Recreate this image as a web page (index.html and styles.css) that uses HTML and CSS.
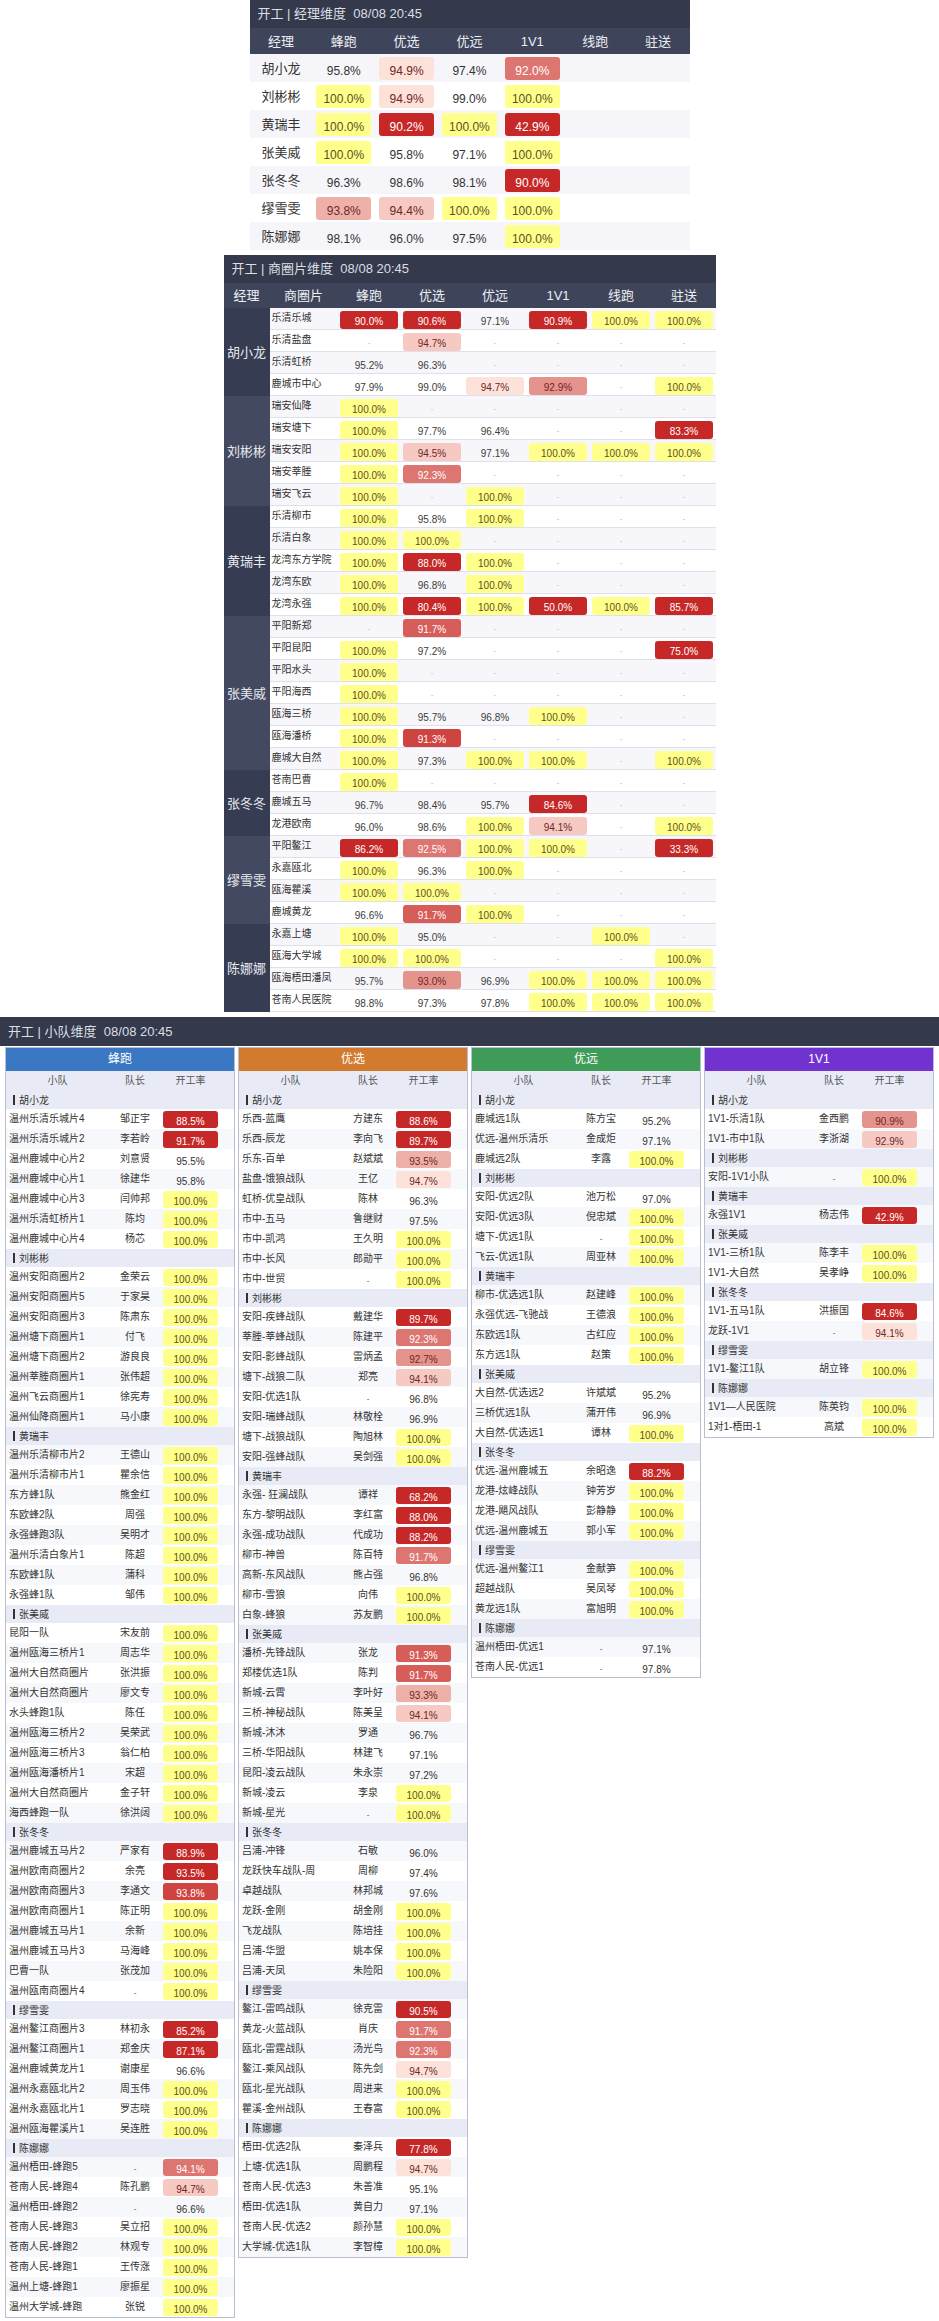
FILE: index.html
```html
<!DOCTYPE html>
<html lang="zh">
<head>
<meta charset="utf-8">
<title>开工</title>
<link rel="stylesheet" href="styles.css">
</head>
<body>
<section class="sec1">
<div class="ttl">开工 | 经理维度  08/08 20:45</div>
<table class="mgr">
<thead><tr><th>经理</th><th>蜂跑</th><th>优选</th><th>优远</th><th>1V1</th><th>线跑</th><th>驻送</th></tr></thead>
<tbody>
<tr><td>胡小龙</td><td><b>95.8%</b></td><td><b class="r7">94.9%</b></td><td><b>97.4%</b></td><td><b class="r3">92.0%</b></td><td></td><td></td></tr>
<tr><td>刘彬彬</td><td><b class="y">100.0%</b></td><td><b class="r7">94.9%</b></td><td><b>99.0%</b></td><td><b class="y">100.0%</b></td><td></td><td></td></tr>
<tr><td>黄瑞丰</td><td><b class="y">100.0%</b></td><td><b class="r0">90.2%</b></td><td><b class="y">100.0%</b></td><td><b class="r0">42.9%</b></td><td></td><td></td></tr>
<tr><td>张美威</td><td><b class="y">100.0%</b></td><td><b>95.8%</b></td><td><b>97.1%</b></td><td><b class="y">100.0%</b></td><td></td><td></td></tr>
<tr><td>张冬冬</td><td><b>96.3%</b></td><td><b>98.6%</b></td><td><b>98.1%</b></td><td><b class="r0">90.0%</b></td><td></td><td></td></tr>
<tr><td>缪雪雯</td><td><b class="r5">93.8%</b></td><td><b class="r6">94.4%</b></td><td><b class="y">100.0%</b></td><td><b class="y">100.0%</b></td><td></td><td></td></tr>
<tr><td>陈娜娜</td><td><b>98.1%</b></td><td><b>96.0%</b></td><td><b>97.5%</b></td><td><b class="y">100.0%</b></td><td></td><td></td></tr>
</tbody>
</table>
</section>

<section class="sec2">
<div class="ttl">开工 | 商圈片维度  08/08 20:45</div>
<table class="shq">
<colgroup><col class="c-m"><col class="c-n"><col><col><col><col><col><col></colgroup>
<thead><tr><th>经理</th><th>商圈片</th><th>蜂跑</th><th>优选</th><th>优远</th><th>1V1</th><th>线跑</th><th>驻送</th></tr></thead>
<tbody>
<tr><td class="m" rowspan="4">胡小龙</td><td class="n">乐清乐城</td><td><b class="r0">90.0%</b></td><td><b class="r0">90.6%</b></td><td><b>97.1%</b></td><td><b class="r0">90.9%</b></td><td><b class="y">100.0%</b></td><td><b class="y">100.0%</b></td></tr>
<tr><td class="n">乐清盐盘</td><td class="na">-</td><td><b class="r6">94.7%</b></td><td class="na">-</td><td class="na">-</td><td class="na">-</td><td class="na">-</td></tr>
<tr><td class="n">乐清虹桥</td><td><b>95.2%</b></td><td><b>96.3%</b></td><td class="na">-</td><td class="na">-</td><td class="na">-</td><td class="na">-</td></tr>
<tr><td class="n">鹿城市中心</td><td><b>97.9%</b></td><td><b>99.0%</b></td><td><b class="r7">94.7%</b></td><td><b class="r4">92.9%</b></td><td class="na">-</td><td><b class="y">100.0%</b></td></tr>

<tr><td class="m m2" rowspan="5">刘彬彬</td><td class="n">瑞安仙降</td><td><b class="y">100.0%</b></td><td class="na">-</td><td class="na">-</td><td class="na">-</td><td class="na">-</td><td class="na">-</td></tr>
<tr><td class="n">瑞安塘下</td><td><b class="y">100.0%</b></td><td><b>97.7%</b></td><td><b>96.4%</b></td><td class="na">-</td><td class="na">-</td><td><b class="r0">83.3%</b></td></tr>
<tr><td class="n">瑞安安阳</td><td><b class="y">100.0%</b></td><td><b class="r6">94.5%</b></td><td><b>97.1%</b></td><td><b class="y">100.0%</b></td><td><b class="y">100.0%</b></td><td><b class="y">100.0%</b></td></tr>
<tr><td class="n">瑞安莘塍</td><td><b class="y">100.0%</b></td><td><b class="r3">92.3%</b></td><td class="na">-</td><td class="na">-</td><td class="na">-</td><td class="na">-</td></tr>
<tr><td class="n">瑞安飞云</td><td><b class="y">100.0%</b></td><td class="na">-</td><td><b class="y">100.0%</b></td><td class="na">-</td><td class="na">-</td><td class="na">-</td></tr>

<tr><td class="m" rowspan="5">黄瑞丰</td><td class="n">乐清柳市</td><td><b class="y">100.0%</b></td><td><b>95.8%</b></td><td><b class="y">100.0%</b></td><td class="na">-</td><td class="na">-</td><td class="na">-</td></tr>
<tr><td class="n">乐清白象</td><td><b class="y">100.0%</b></td><td><b class="y">100.0%</b></td><td class="na">-</td><td class="na">-</td><td class="na">-</td><td class="na">-</td></tr>
<tr><td class="n">龙湾东方学院</td><td><b class="y">100.0%</b></td><td><b class="r0">88.0%</b></td><td><b class="y">100.0%</b></td><td class="na">-</td><td class="na">-</td><td class="na">-</td></tr>
<tr><td class="n">龙湾东欧</td><td><b class="y">100.0%</b></td><td><b>96.8%</b></td><td><b class="y">100.0%</b></td><td class="na">-</td><td class="na">-</td><td class="na">-</td></tr>
<tr><td class="n">龙湾永强</td><td><b class="y">100.0%</b></td><td><b class="r0">80.4%</b></td><td><b class="y">100.0%</b></td><td><b class="r0">50.0%</b></td><td><b class="y">100.0%</b></td><td><b class="r0">85.7%</b></td></tr>

<tr><td class="m m2" rowspan="7">张美威</td><td class="n">平阳新郑</td><td class="na">-</td><td><b class="r2">91.7%</b></td><td class="na">-</td><td class="na">-</td><td class="na">-</td><td class="na">-</td></tr>
<tr><td class="n">平阳昆阳</td><td><b class="y">100.0%</b></td><td><b>97.2%</b></td><td class="na">-</td><td class="na">-</td><td class="na">-</td><td><b class="r0">75.0%</b></td></tr>
<tr><td class="n">平阳水头</td><td><b class="y">100.0%</b></td><td class="na">-</td><td class="na">-</td><td class="na">-</td><td class="na">-</td><td class="na">-</td></tr>
<tr><td class="n">平阳海西</td><td><b class="y">100.0%</b></td><td class="na">-</td><td class="na">-</td><td class="na">-</td><td class="na">-</td><td class="na">-</td></tr>
<tr><td class="n">瓯海三桥</td><td><b class="y">100.0%</b></td><td><b>95.7%</b></td><td><b>96.8%</b></td><td><b class="y">100.0%</b></td><td class="na">-</td><td class="na">-</td></tr>
<tr><td class="n">瓯海潘桥</td><td><b class="y">100.0%</b></td><td><b class="r1">91.3%</b></td><td class="na">-</td><td class="na">-</td><td class="na">-</td><td class="na">-</td></tr>
<tr><td class="n">鹿城大自然</td><td><b class="y">100.0%</b></td><td><b>97.3%</b></td><td><b class="y">100.0%</b></td><td><b class="y">100.0%</b></td><td class="na">-</td><td><b class="y">100.0%</b></td></tr>

<tr><td class="m" rowspan="3">张冬冬</td><td class="n">苍南巴曹</td><td><b class="y">100.0%</b></td><td class="na">-</td><td class="na">-</td><td class="na">-</td><td class="na">-</td><td class="na">-</td></tr>
<tr><td class="n">鹿城五马</td><td><b>96.7%</b></td><td><b>98.4%</b></td><td><b>95.7%</b></td><td><b class="r0">84.6%</b></td><td class="na">-</td><td class="na">-</td></tr>
<tr><td class="n">龙港欧南</td><td><b>96.0%</b></td><td><b>98.6%</b></td><td><b class="y">100.0%</b></td><td><b class="r6">94.1%</b></td><td class="na">-</td><td><b class="y">100.0%</b></td></tr>

<tr><td class="m m2" rowspan="4">缪雪雯</td><td class="n">平阳鳌江</td><td><b class="r0">86.2%</b></td><td><b class="r3">92.5%</b></td><td><b class="y">100.0%</b></td><td><b class="y">100.0%</b></td><td class="na">-</td><td><b class="r0">33.3%</b></td></tr>
<tr><td class="n">永嘉瓯北</td><td><b class="y">100.0%</b></td><td><b>96.3%</b></td><td><b class="y">100.0%</b></td><td class="na">-</td><td class="na">-</td><td class="na">-</td></tr>
<tr><td class="n">瓯海瞿溪</td><td><b class="y">100.0%</b></td><td><b class="y">100.0%</b></td><td class="na">-</td><td class="na">-</td><td class="na">-</td><td class="na">-</td></tr>
<tr><td class="n">鹿城黄龙</td><td><b>96.6%</b></td><td><b class="r2">91.7%</b></td><td><b class="y">100.0%</b></td><td class="na">-</td><td class="na">-</td><td class="na">-</td></tr>

<tr><td class="m" rowspan="4">陈娜娜</td><td class="n">永嘉上塘</td><td><b class="y">100.0%</b></td><td><b>95.0%</b></td><td class="na">-</td><td class="na">-</td><td><b class="y">100.0%</b></td><td class="na">-</td></tr>
<tr><td class="n">瓯海大学城</td><td><b class="y">100.0%</b></td><td><b class="y">100.0%</b></td><td class="na">-</td><td class="na">-</td><td class="na">-</td><td><b class="y">100.0%</b></td></tr>
<tr><td class="n">瓯海梧田潘凤</td><td><b>95.7%</b></td><td><b class="r4">93.0%</b></td><td><b>96.9%</b></td><td><b class="y">100.0%</b></td><td><b class="y">100.0%</b></td><td><b class="y">100.0%</b></td></tr>
<tr><td class="n">苍南人民医院</td><td><b>98.8%</b></td><td><b>97.3%</b></td><td><b>97.8%</b></td><td><b class="y">100.0%</b></td><td><b class="y">100.0%</b></td><td><b class="y">100.0%</b></td></tr>
</tbody>
</table>
</section>

<section class="sec3">
<div class="ttl ttl3">开工 | 小队维度  08/08 20:45</div>
<div class="cards">

<div class="card">
<h3 class="h-blue">蜂跑</h3>
<table class="tm">
<colgroup><col class="c1"><col class="c2"><col class="c3"><col></colgroup>
<thead><tr><th>小队</th><th>队长</th><th>开工率</th><th></th></tr></thead>
<tbody>
<tr class="g"><td colspan="4"><i></i>胡小龙</td></tr>
<tr><td class="t">温州乐清乐城片4</td><td>邹正宇</td><td><b class="r0">88.5%</b></td><td></td></tr>
<tr><td class="t">温州乐清乐城片2</td><td>李若岭</td><td><b class="r0">91.7%</b></td><td></td></tr>
<tr><td class="t">温州鹿城中心片2</td><td>刘意贤</td><td><b>95.5%</b></td><td></td></tr>
<tr><td class="t">温州鹿城中心片1</td><td>徐建华</td><td><b>95.8%</b></td><td></td></tr>
<tr><td class="t">温州鹿城中心片3</td><td>闫帅邦</td><td><b class="y">100.0%</b></td><td></td></tr>
<tr><td class="t">温州乐清虹桥片1</td><td>陈均</td><td><b class="y">100.0%</b></td><td></td></tr>
<tr><td class="t">温州鹿城中心片4</td><td>杨芯</td><td><b class="y">100.0%</b></td><td></td></tr>
<tr class="g"><td colspan="4"><i></i>刘彬彬</td></tr>
<tr><td class="t">温州安阳商圈片2</td><td>金荣云</td><td><b class="y">100.0%</b></td><td></td></tr>
<tr><td class="t">温州安阳商圈片5</td><td>于家昊</td><td><b class="y">100.0%</b></td><td></td></tr>
<tr><td class="t">温州安阳商圈片3</td><td>陈肃东</td><td><b class="y">100.0%</b></td><td></td></tr>
<tr><td class="t">温州塘下商圈片1</td><td>付飞</td><td><b class="y">100.0%</b></td><td></td></tr>
<tr><td class="t">温州塘下商圈片2</td><td>游良良</td><td><b class="y">100.0%</b></td><td></td></tr>
<tr><td class="t">温州莘塍商圈片1</td><td>张伟超</td><td><b class="y">100.0%</b></td><td></td></tr>
<tr><td class="t">温州飞云商圈片1</td><td>徐宪寿</td><td><b class="y">100.0%</b></td><td></td></tr>
<tr><td class="t">温州仙降商圈片1</td><td>马小康</td><td><b class="y">100.0%</b></td><td></td></tr>
<tr class="g"><td colspan="4"><i></i>黄瑞丰</td></tr>
<tr><td class="t">温州乐清柳市片2</td><td>王德山</td><td><b class="y">100.0%</b></td><td></td></tr>
<tr><td class="t">温州乐清柳市片1</td><td>瞿余信</td><td><b class="y">100.0%</b></td><td></td></tr>
<tr><td class="t">东方蜂1队</td><td>熊金红</td><td><b class="y">100.0%</b></td><td></td></tr>
<tr><td class="t">东欧蜂2队</td><td>周强</td><td><b class="y">100.0%</b></td><td></td></tr>
<tr><td class="t">永强蜂跑3队</td><td>吴明才</td><td><b class="y">100.0%</b></td><td></td></tr>
<tr><td class="t">温州乐清白象片1</td><td>陈超</td><td><b class="y">100.0%</b></td><td></td></tr>
<tr><td class="t">东欧蜂1队</td><td>蒲科</td><td><b class="y">100.0%</b></td><td></td></tr>
<tr><td class="t">永强蜂1队</td><td>邹伟</td><td><b class="y">100.0%</b></td><td></td></tr>
<tr class="g"><td colspan="4"><i></i>张美威</td></tr>
<tr><td class="t">昆阳一队</td><td>宋友前</td><td><b class="y">100.0%</b></td><td></td></tr>
<tr><td class="t">温州瓯海三桥片1</td><td>周志华</td><td><b class="y">100.0%</b></td><td></td></tr>
<tr><td class="t">温州大自然商圈片</td><td>张洪振</td><td><b class="y">100.0%</b></td><td></td></tr>
<tr><td class="t">温州大自然商圈片</td><td>廖文专</td><td><b class="y">100.0%</b></td><td></td></tr>
<tr><td class="t">水头蜂跑1队</td><td>陈任</td><td><b class="y">100.0%</b></td><td></td></tr>
<tr><td class="t">温州瓯海三桥片2</td><td>吴荣武</td><td><b class="y">100.0%</b></td><td></td></tr>
<tr><td class="t">温州瓯海三桥片3</td><td>翁仁柏</td><td><b class="y">100.0%</b></td><td></td></tr>
<tr><td class="t">温州瓯海潘桥片1</td><td>宋超</td><td><b class="y">100.0%</b></td><td></td></tr>
<tr><td class="t">温州大自然商圈片</td><td>金子轩</td><td><b class="y">100.0%</b></td><td></td></tr>
<tr><td class="t">海西蜂跑一队</td><td>徐洪阔</td><td><b class="y">100.0%</b></td><td></td></tr>
<tr class="g"><td colspan="4"><i></i>张冬冬</td></tr>
<tr><td class="t">温州鹿城五马片2</td><td>严家有</td><td><b class="r0">88.9%</b></td><td></td></tr>
<tr><td class="t">温州欧南商圈片2</td><td>余亮</td><td><b class="r0">93.5%</b></td><td></td></tr>
<tr><td class="t">温州欧南商圈片3</td><td>李通文</td><td><b class="r1">93.8%</b></td><td></td></tr>
<tr><td class="t">温州欧南商圈片1</td><td>陈正明</td><td><b class="y">100.0%</b></td><td></td></tr>
<tr><td class="t">温州鹿城五马片1</td><td>余新</td><td><b class="y">100.0%</b></td><td></td></tr>
<tr><td class="t">温州鹿城五马片3</td><td>马海峰</td><td><b class="y">100.0%</b></td><td></td></tr>
<tr><td class="t">巴曹一队</td><td>张茂加</td><td><b class="y">100.0%</b></td><td></td></tr>
<tr><td class="t">温州瓯南商圈片4</td><td class="nd">-</td><td><b class="y">100.0%</b></td><td></td></tr>
<tr class="g"><td colspan="4"><i></i>缪雪雯</td></tr>
<tr><td class="t">温州鳌江商圈片3</td><td>林初永</td><td><b class="r0">85.2%</b></td><td></td></tr>
<tr><td class="t">温州鳌江商圈片1</td><td>郑金庆</td><td><b class="r0">87.1%</b></td><td></td></tr>
<tr><td class="t">温州鹿城黄龙片1</td><td>谢康星</td><td><b>96.6%</b></td><td></td></tr>
<tr><td class="t">温州永嘉瓯北片2</td><td>周玉伟</td><td><b class="y">100.0%</b></td><td></td></tr>
<tr><td class="t">温州永嘉瓯北片1</td><td>罗志晓</td><td><b class="y">100.0%</b></td><td></td></tr>
<tr><td class="t">温州瓯海瞿溪片1</td><td>吴连胜</td><td><b class="y">100.0%</b></td><td></td></tr>
<tr class="g"><td colspan="4"><i></i>陈娜娜</td></tr>
<tr><td class="t">温州梧田-蜂跑5</td><td class="nd">-</td><td><b class="r3">94.1%</b></td><td></td></tr>
<tr><td class="t">苍南人民-蜂跑4</td><td>陈孔鹏</td><td><b class="r6">94.7%</b></td><td></td></tr>
<tr><td class="t">温州梧田-蜂跑2</td><td class="nd">-</td><td><b>96.6%</b></td><td></td></tr>
<tr><td class="t">苍南人民-蜂跑3</td><td>吴立招</td><td><b class="y">100.0%</b></td><td></td></tr>
<tr><td class="t">苍南人民-蜂跑2</td><td>林观专</td><td><b class="y">100.0%</b></td><td></td></tr>
<tr><td class="t">苍南人民-蜂跑1</td><td>王传涨</td><td><b class="y">100.0%</b></td><td></td></tr>
<tr><td class="t">温州上塘-蜂跑1</td><td>廖振星</td><td><b class="y">100.0%</b></td><td></td></tr>
<tr><td class="t">温州大学城-蜂跑</td><td>张锐</td><td><b class="y">100.0%</b></td><td></td></tr>
</tbody>
</table>
</div>

<div class="card">
<h3 class="h-orange">优选</h3>
<table class="tm">
<colgroup><col class="c1"><col class="c2"><col class="c3"><col></colgroup>
<thead><tr><th>小队</th><th>队长</th><th>开工率</th><th></th></tr></thead>
<tbody>
<tr class="g"><td colspan="4"><i></i>胡小龙</td></tr>
<tr><td class="t">乐西-蓝鹰</td><td>方建东</td><td><b class="r0">88.6%</b></td><td></td></tr>
<tr><td class="t">乐西-辰龙</td><td>李向飞</td><td><b class="r0">89.7%</b></td><td></td></tr>
<tr><td class="t">乐东-百单</td><td>赵斌斌</td><td><b class="r5">93.5%</b></td><td></td></tr>
<tr><td class="t">盐盘-饿狼战队</td><td>王亿</td><td><b class="r7">94.7%</b></td><td></td></tr>
<tr><td class="t">虹桥-优皇战队</td><td>陈林</td><td><b>96.3%</b></td><td></td></tr>
<tr><td class="t">市中-五马</td><td>鲁继财</td><td><b>97.5%</b></td><td></td></tr>
<tr><td class="t">市中-凯鸿</td><td>王久明</td><td><b class="y">100.0%</b></td><td></td></tr>
<tr><td class="t">市中-长风</td><td>郎勋平</td><td><b class="y">100.0%</b></td><td></td></tr>
<tr><td class="t">市中-世贸</td><td class="nd">-</td><td><b class="y">100.0%</b></td><td></td></tr>
<tr class="g"><td colspan="4"><i></i>刘彬彬</td></tr>
<tr><td class="t">安阳-疾蜂战队</td><td>戴建华</td><td><b class="r0">89.7%</b></td><td></td></tr>
<tr><td class="t">莘塍-莘蜂战队</td><td>陈建平</td><td><b class="r3">92.3%</b></td><td></td></tr>
<tr><td class="t">安阳-影蜂战队</td><td>雷炳孟</td><td><b class="r4">92.7%</b></td><td></td></tr>
<tr><td class="t">塘下-战狼二队</td><td>郑亮</td><td><b class="r6">94.1%</b></td><td></td></tr>
<tr><td class="t">安阳-优选1队</td><td class="nd">-</td><td><b>96.8%</b></td><td></td></tr>
<tr><td class="t">安阳-瑞蜂战队</td><td>林敬栓</td><td><b>96.9%</b></td><td></td></tr>
<tr><td class="t">塘下-战狼战队</td><td>陶旭林</td><td><b class="y">100.0%</b></td><td></td></tr>
<tr><td class="t">安阳-强蜂战队</td><td>吴剑强</td><td><b class="y">100.0%</b></td><td></td></tr>
<tr class="g"><td colspan="4"><i></i>黄瑞丰</td></tr>
<tr><td class="t">永强- 狂澜战队</td><td>谭祥</td><td><b class="r0">68.2%</b></td><td></td></tr>
<tr><td class="t">东方-黎明战队</td><td>李红富</td><td><b class="r0">88.0%</b></td><td></td></tr>
<tr><td class="t">永强-成功战队</td><td>代成功</td><td><b class="r0">88.2%</b></td><td></td></tr>
<tr><td class="t">柳市-神兽</td><td>陈百特</td><td><b class="r3">91.7%</b></td><td></td></tr>
<tr><td class="t">高新-东风战队</td><td>熊占强</td><td><b>96.8%</b></td><td></td></tr>
<tr><td class="t">柳市-雪狼</td><td>向伟</td><td><b class="y">100.0%</b></td><td></td></tr>
<tr><td class="t">白象-蜂狼</td><td>苏友鹏</td><td><b class="y">100.0%</b></td><td></td></tr>
<tr class="g"><td colspan="4"><i></i>张美威</td></tr>
<tr><td class="t">潘桥-先锋战队</td><td>张龙</td><td><b class="r2">91.3%</b></td><td></td></tr>
<tr><td class="t">郑楼优选1队</td><td>陈判</td><td><b class="r2">91.7%</b></td><td></td></tr>
<tr><td class="t">新城-云霄</td><td>李叶好</td><td><b class="r5">93.3%</b></td><td></td></tr>
<tr><td class="t">三桥-神秘战队</td><td>陈美呈</td><td><b class="r6">94.1%</b></td><td></td></tr>
<tr><td class="t">新城-沐沐</td><td>罗通</td><td><b>96.7%</b></td><td></td></tr>
<tr><td class="t">三桥-华阳战队</td><td>林建飞</td><td><b>97.1%</b></td><td></td></tr>
<tr><td class="t">昆阳-凌云战队</td><td>朱永崇</td><td><b>97.2%</b></td><td></td></tr>
<tr><td class="t">新城-凌云</td><td>李泉</td><td><b class="y">100.0%</b></td><td></td></tr>
<tr><td class="t">新城-星光</td><td class="nd">-</td><td><b class="y">100.0%</b></td><td></td></tr>
<tr class="g"><td colspan="4"><i></i>张冬冬</td></tr>
<tr><td class="t">吕浦-冲锋</td><td>石敏</td><td><b>96.0%</b></td><td></td></tr>
<tr><td class="t">龙跃快车战队-周</td><td>周柳</td><td><b>97.4%</b></td><td></td></tr>
<tr><td class="t">卓越战队</td><td>林邦城</td><td><b>97.6%</b></td><td></td></tr>
<tr><td class="t">龙跃-金刚</td><td>胡金刚</td><td><b class="y">100.0%</b></td><td></td></tr>
<tr><td class="t">飞龙战队</td><td>陈培挂</td><td><b class="y">100.0%</b></td><td></td></tr>
<tr><td class="t">吕浦-华盟</td><td>姚本保</td><td><b class="y">100.0%</b></td><td></td></tr>
<tr><td class="t">吕浦-天凤</td><td>朱险阳</td><td><b class="y">100.0%</b></td><td></td></tr>
<tr class="g"><td colspan="4"><i></i>缪雪雯</td></tr>
<tr><td class="t">鳌江-雷鸣战队</td><td>徐克雷</td><td><b class="r0">90.5%</b></td><td></td></tr>
<tr><td class="t">黄龙-火蓝战队</td><td>肖庆</td><td><b class="r3">91.7%</b></td><td></td></tr>
<tr><td class="t">瓯北-雷霆战队</td><td>汤光鸟</td><td><b class="r3">92.3%</b></td><td></td></tr>
<tr><td class="t">鳌江-乘风战队</td><td>陈先剑</td><td><b class="r7">94.7%</b></td><td></td></tr>
<tr><td class="t">瓯北-星光战队</td><td>周进来</td><td><b class="y">100.0%</b></td><td></td></tr>
<tr><td class="t">瞿溪-金州战队</td><td>王春富</td><td><b class="y">100.0%</b></td><td></td></tr>
<tr class="g"><td colspan="4"><i></i>陈娜娜</td></tr>
<tr><td class="t">梧田-优选2队</td><td>秦泽兵</td><td><b class="r0">77.8%</b></td><td></td></tr>
<tr><td class="t">上塘-优选1队</td><td>周鹏程</td><td><b class="r7">94.7%</b></td><td></td></tr>
<tr><td class="t">苍南人民-优选3</td><td>朱善准</td><td><b>95.1%</b></td><td></td></tr>
<tr><td class="t">梧田-优选1队</td><td>黄自力</td><td><b>97.1%</b></td><td></td></tr>
<tr><td class="t">苍南人民-优选2</td><td>颜孙慧</td><td><b class="y">100.0%</b></td><td></td></tr>
<tr><td class="t">大学城-优选1队</td><td>李智樟</td><td><b class="y">100.0%</b></td><td></td></tr>
</tbody>
</table>
</div>

<div class="card">
<h3 class="h-green">优远</h3>
<table class="tm">
<colgroup><col class="c1"><col class="c2"><col class="c3"><col></colgroup>
<thead><tr><th>小队</th><th>队长</th><th>开工率</th><th></th></tr></thead>
<tbody>
<tr class="g"><td colspan="4"><i></i>胡小龙</td></tr>
<tr><td class="t">鹿城远1队</td><td>陈方宝</td><td><b>95.2%</b></td><td></td></tr>
<tr><td class="t">优远-温州乐清乐</td><td>金成炬</td><td><b>97.1%</b></td><td></td></tr>
<tr><td class="t">鹿城远2队</td><td>李露</td><td><b class="y">100.0%</b></td><td></td></tr>
<tr class="g"><td colspan="4"><i></i>刘彬彬</td></tr>
<tr><td class="t">安阳-优远2队</td><td>池万松</td><td><b>97.0%</b></td><td></td></tr>
<tr><td class="t">安阳-优远3队</td><td>倪忠斌</td><td><b class="y">100.0%</b></td><td></td></tr>
<tr><td class="t">塘下-优远1队</td><td class="nd">-</td><td><b class="y">100.0%</b></td><td></td></tr>
<tr><td class="t">飞云-优远1队</td><td>周亚林</td><td><b class="y">100.0%</b></td><td></td></tr>
<tr class="g"><td colspan="4"><i></i>黄瑞丰</td></tr>
<tr><td class="t">柳市-优选远1队</td><td>赵建峰</td><td><b class="y">100.0%</b></td><td></td></tr>
<tr><td class="t">永强优远-飞驰战</td><td>王德浪</td><td><b class="y">100.0%</b></td><td></td></tr>
<tr><td class="t">东欧远1队</td><td>古红应</td><td><b class="y">100.0%</b></td><td></td></tr>
<tr><td class="t">东方远1队</td><td>赵策</td><td><b class="y">100.0%</b></td><td></td></tr>
<tr class="g"><td colspan="4"><i></i>张美威</td></tr>
<tr><td class="t">大自然-优选远2</td><td>许斌斌</td><td><b>95.2%</b></td><td></td></tr>
<tr><td class="t">三桥优远1队</td><td>蒲开伟</td><td><b>96.9%</b></td><td></td></tr>
<tr><td class="t">大自然-优选远1</td><td>谭林</td><td><b class="y">100.0%</b></td><td></td></tr>
<tr class="g"><td colspan="4"><i></i>张冬冬</td></tr>
<tr><td class="t">优远-温州鹿城五</td><td>余昭逸</td><td><b class="r0">88.2%</b></td><td></td></tr>
<tr><td class="t">龙港-炫峰战队</td><td>钟芳岁</td><td><b class="y">100.0%</b></td><td></td></tr>
<tr><td class="t">龙港-飓风战队</td><td>彭静静</td><td><b class="y">100.0%</b></td><td></td></tr>
<tr><td class="t">优远-温州鹿城五</td><td>郭小军</td><td><b class="y">100.0%</b></td><td></td></tr>
<tr class="g"><td colspan="4"><i></i>缪雪雯</td></tr>
<tr><td class="t">优远-温州鳌江1</td><td>金献笋</td><td><b class="y">100.0%</b></td><td></td></tr>
<tr><td class="t">超越战队</td><td>吴凤琴</td><td><b class="y">100.0%</b></td><td></td></tr>
<tr><td class="t">黄龙远1队</td><td>富旭明</td><td><b class="y">100.0%</b></td><td></td></tr>
<tr class="g"><td colspan="4"><i></i>陈娜娜</td></tr>
<tr><td class="t">温州梧田-优远1</td><td class="nd">-</td><td><b>97.1%</b></td><td></td></tr>
<tr><td class="t">苍南人民-优远1</td><td class="nd">-</td><td><b>97.8%</b></td><td></td></tr>
</tbody>
</table>
</div>

<div class="card">
<h3 class="h-purple">1V1</h3>
<table class="tm">
<colgroup><col class="c1"><col class="c2"><col class="c3"><col></colgroup>
<thead><tr><th>小队</th><th>队长</th><th>开工率</th><th></th></tr></thead>
<tbody>
<tr class="g"><td colspan="4"><i></i>胡小龙</td></tr>
<tr><td class="t">1V1-乐清1队</td><td>金西鹏</td><td><b class="r4">90.9%</b></td><td></td></tr>
<tr><td class="t">1V1-市中1队</td><td>李浙湖</td><td><b class="r6">92.9%</b></td><td></td></tr>
<tr class="g"><td colspan="4"><i></i>刘彬彬</td></tr>
<tr><td class="t">安阳-1V1小队</td><td class="nd">-</td><td><b class="y">100.0%</b></td><td></td></tr>
<tr class="g"><td colspan="4"><i></i>黄瑞丰</td></tr>
<tr><td class="t">永强1V1</td><td>杨志伟</td><td><b class="r0">42.9%</b></td><td></td></tr>
<tr class="g"><td colspan="4"><i></i>张美威</td></tr>
<tr><td class="t">1V1-三桥1队</td><td>陈李丰</td><td><b class="y">100.0%</b></td><td></td></tr>
<tr><td class="t">1V1-大自然</td><td>吴孝峥</td><td><b class="y">100.0%</b></td><td></td></tr>
<tr class="g"><td colspan="4"><i></i>张冬冬</td></tr>
<tr><td class="t">1V1-五马1队</td><td>洪振国</td><td><b class="r0">84.6%</b></td><td></td></tr>
<tr><td class="t">龙跃-1V1</td><td class="nd">-</td><td><b class="r7">94.1%</b></td><td></td></tr>
<tr class="g"><td colspan="4"><i></i>缪雪雯</td></tr>
<tr><td class="t">1V1-鳌江1队</td><td>胡立锋</td><td><b class="y">100.0%</b></td><td></td></tr>
<tr class="g"><td colspan="4"><i></i>陈娜娜</td></tr>
<tr><td class="t">1V1—人民医院</td><td>陈英钧</td><td><b class="y">100.0%</b></td><td></td></tr>
<tr><td class="t">1对1-梧田-1</td><td>高斌</td><td><b class="y">100.0%</b></td><td></td></tr>
</tbody>
</table>
</div>

</div>
</section>
</body>
</html>
```

FILE: styles.css
```css
* { box-sizing: border-box; }
body {
  margin: 0;
  width: 939px;
  background: #ffffff;
  font-family: "Liberation Sans", "Noto Sans CJK SC", sans-serif;
  color: #3a3a3a;
}
table { border-collapse: collapse; table-layout: fixed; width: 100%; }
th, td { padding: 0; text-align: center; font-weight: normal; vertical-align: middle; line-height: 1; }
b { font-weight: normal; display: inline-block; vertical-align: middle; text-align: center; white-space: nowrap; }

/* badge colours */
.y  { background: #ffff8c; color: #5e5020; }
.r0 { background: #c62828; color: #ffffff; }
.r1 { background: #cf4341; color: #ffffff; }
.r2 { background: #d75d59; color: #ffffff; }
.r3 { background: #dd7570; color: #ffffff; }
.r4 { background: #e5938d; color: #6e2626; }
.r5 { background: #eeb1aa; color: #6e2626; }
.r6 { background: #f6cac3; color: #6e2626; }
.r7 { background: #fde2da; color: #6e2626; }

.ttl {
  background: #343a4c;
  color: #dcdee5;
  font-size: 13px;
  height: 28px;
  line-height: 28px;
  padding-left: 8px;
  white-space: pre;
}

/* section 1: manager table */
.sec1 { width: 440px; margin: 0 auto; }
.mgr th { background: #3e4459; color: #eceef3; font-size: 13px; height: 26px; }
.mgr td { height: 28px; font-size: 13px; color: #333; }
.mgr tbody tr:nth-child(odd) td { background: #f6f6fa; }
.mgr b { width: 55px; height: 23px; border-radius: 3px; font-size: 12px; padding-top: 5px; line-height: 18px; margin-top: 1px; }

/* section 2: area table */
.sec2 { width: 492px; margin: 5px auto 0; }
.shq col.c-m { width: 46px; }
.shq col.c-n { width: 68px; }
.shq th { background: #3e4459; color: #eceef3; font-size: 13px; height: 25px; }
.shq td { height: 22px; font-size: 10px; box-shadow: inset 0 -1px #dfe1ea; }
.shq tbody tr:nth-child(odd) td { background: #f7f7fb; }
.shq tbody tr td.m { background: #363c52; color: #e8e9ef; font-size: 13px; box-shadow: none; }
.shq tbody tr td.m2 { background: #424960; }
.shq td.n { text-align: left; padding-left: 2px; padding-bottom: 2px; color: #333; white-space: nowrap; overflow: hidden; }
.shq td.na { color: #b8b8c2; font-size: 8px; vertical-align: bottom; padding-bottom: 5px; }
.shq b { width: 58px; height: 18px; border-radius: 3px; font-size: 10px; padding-top: 4px; line-height: 14px; margin-top: 1px; }

/* section 3: team cards */
.sec3 { margin-top: 5px; }
.ttl3 { height: 29px; line-height: 29px; }
.cards {
  display: grid;
  grid-template-columns: repeat(4, 230px);
  gap: 3px;
  padding: 1px 5px 0;
  align-items: start;
}
.card { border: 1px solid #b9bfd1; background: #fff; }
.card h3 {
  margin: 0;
  height: 23px;
  line-height: 23px;
  color: #ffffff;
  font-size: 12px;
  font-weight: normal;
  text-align: center;
}
.h-blue { background: #3b78c4; }
.h-orange { background: #d27b2e; }
.h-green { background: #3f9c58; }
.h-purple { background: #7232cf; }
.tm col.c1 { width: 103px; }
.tm col.c2 { width: 52px; }
.tm col.c3 { width: 59px; }
.tm th { background: #e8ebf5; height: 20px; font-size: 10px; color: #555; }
.tm td { height: 20px; font-size: 10px; color: #333; }
.tm tbody tr:nth-child(odd) td { background: #f7f8fc; }
.tm td.t { text-align: left; padding-left: 3px; white-space: nowrap; overflow: hidden; }
.tm td.nd { font-size: 8px; color: #444; vertical-align: bottom; padding-bottom: 4px; }
.tm tbody tr.g td { background: #e8ebf5; height: 18px; text-align: left; padding-left: 7px; color: #333; }
.tm tr.g i { display: inline-block; width: 2px; height: 10px; background: #333; margin-right: 4px; vertical-align: -1px; }
.tm b { width: 55px; height: 17px; border-radius: 3px; font-size: 10px; padding-top: 4px; line-height: 13px; margin-top: 1px; }
```
